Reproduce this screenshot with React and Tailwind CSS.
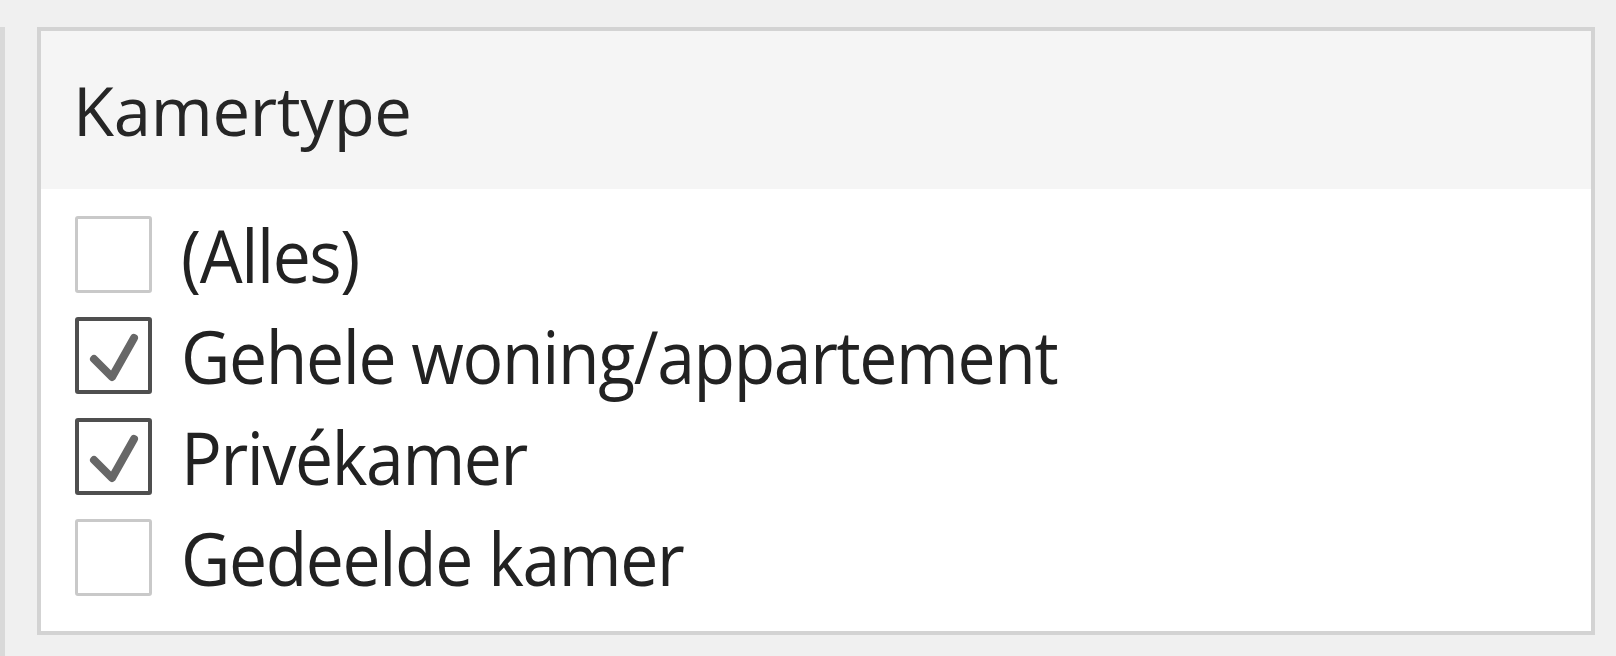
import React from "react";

const items = [
  { label: "(Alles)", checked: false },
  { label: "Gehele woning/appartement", checked: true },
  { label: "Privékamer", checked: true },
  { label: "Gedeelde kamer", checked: false },
];

function Box({ checked }) {
  return (
    <div
      className={
        "w-[77px] h-[77px] shrink-0 rounded-[3px] bg-white relative " +
        (checked ? "border-[4px] border-[#4f4f4f]" : "border-[3px] border-[#c9c9c9]")
      }
    >
      {checked && (
        <svg viewBox="0 0 77 77" className="absolute -left-[4px] -top-[4px] w-[77px] h-[77px]">
          <path d="M19 42 L37 60 L59 21" fill="none" stroke="#676767" strokeWidth="8" strokeLinecap="round" strokeLinejoin="round" />
        </svg>
      )}
    </div>
  );
}

export default function App() {
  return (
    <div
      className="w-[1616px] h-[656px] bg-[#f0f0f0] flex overflow-hidden"
      style={{ fontFamily: '"Open Sans", "Noto Sans", sans-serif' }}
    >
      <div className="w-[5px] mt-[27px] h-[629px] bg-[#d9d9d9] shrink-0" />
      <div className="ml-[32px] mt-[27px] w-[1558px] h-[608px] border-[4px] border-[#d3d3d3] bg-white flex flex-col">
        <div className="h-[158px] bg-[#f5f5f5] flex items-center pl-[32px] shrink-0">
          <span className="text-[#262626] text-[67px] leading-none tracking-[-0.3px] font-medium">Kamertype</span>
        </div>
        <div className="flex flex-col pt-[27px] pl-[34px] gap-[24px]">
          {items.map((it) => (
            <div key={it.label} className="flex items-center gap-[29px] h-[77px]">
              <Box checked={it.checked} />
              <span className="inline-block origin-left scale-x-[0.93] text-[#222222] text-[73px] leading-none tracking-[-1.5px] font-medium whitespace-nowrap">
                {it.label}
              </span>
            </div>
          ))}
        </div>
      </div>
    </div>
  );
}
